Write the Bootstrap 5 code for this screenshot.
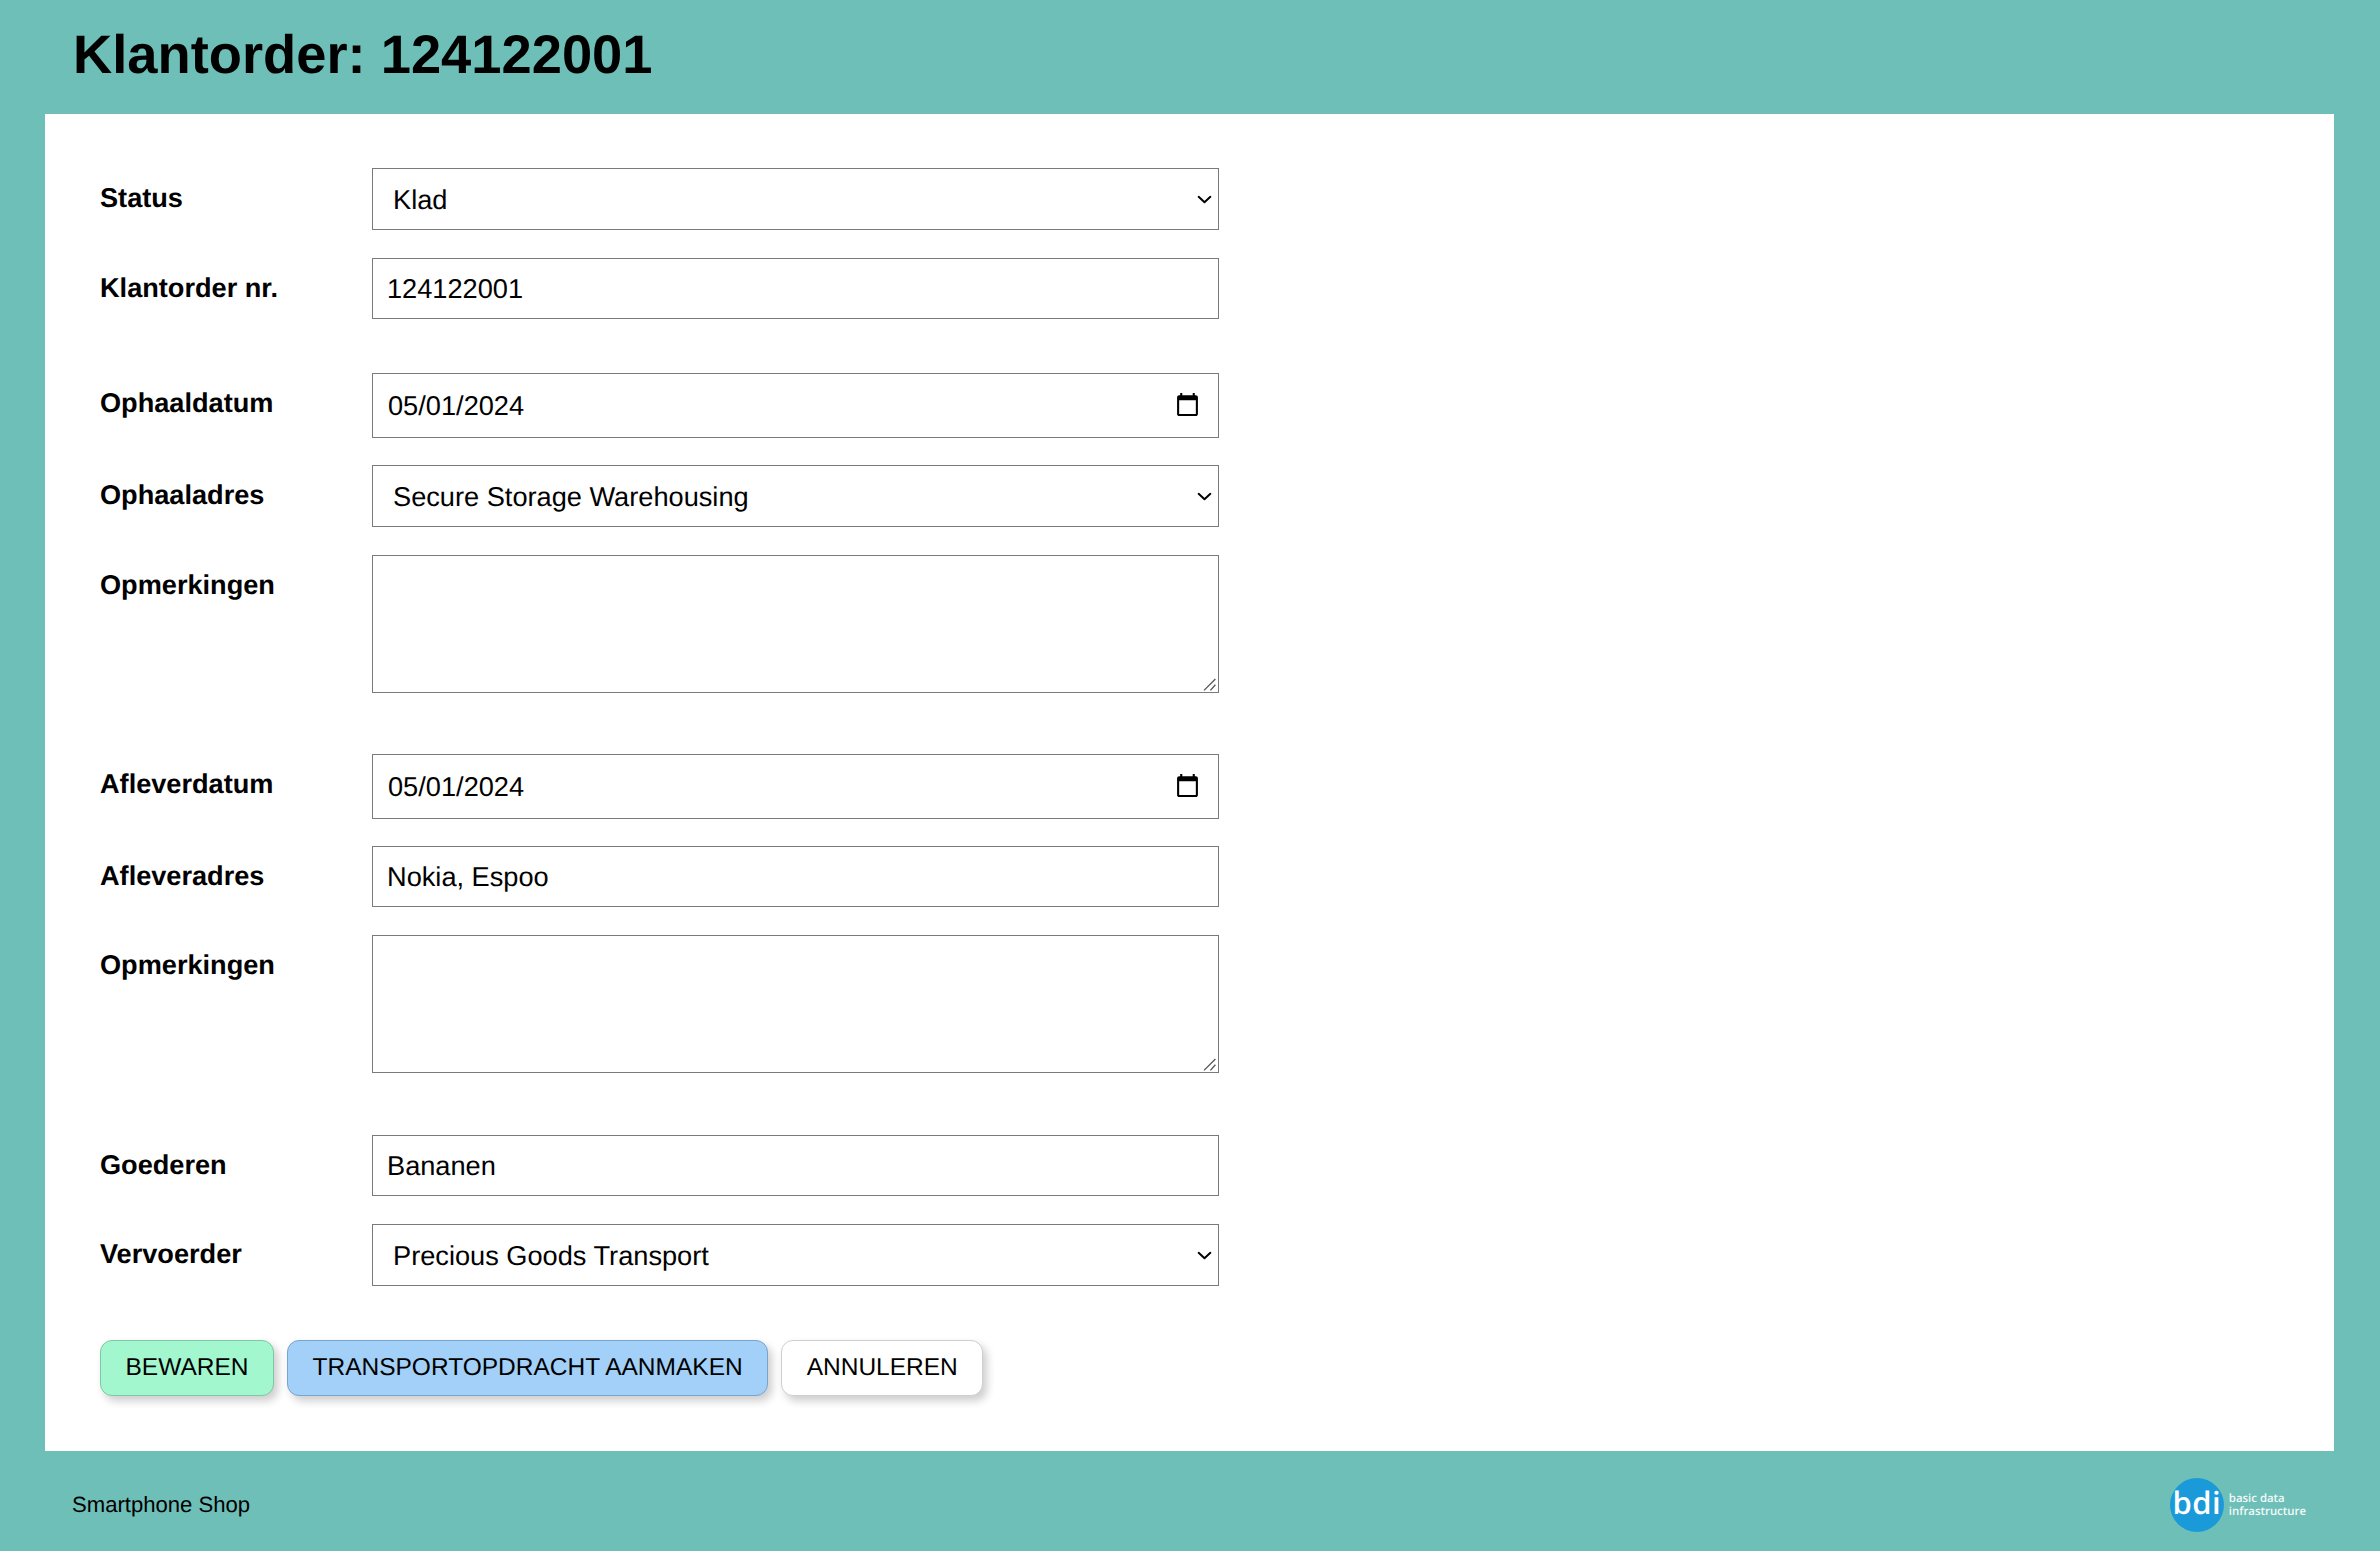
<!DOCTYPE html>
<html lang="en">
<head>
  <meta charset="UTF-8" />
  <meta name="viewport" content="width=device-width, initial-scale=1.0"/>
  <title>Klantorder</title>
  <link href="https://cdn.jsdelivr.net/npm/bootstrap@5.3.0/dist/css/bootstrap.min.css" rel="stylesheet">
  <style>
    body { background: #6ebfb8; color: #000; font-family: "Liberation Sans", Arial, sans-serif; font-size: 27px; min-height: 100vh; text-rendering: geometricPrecision; }
    .page-head { height: 114px; padding: 26px 0 0 73px; }
    .page-head h1 { font-size: 54.3px; font-weight: 700; line-height: 57px; margin: 0; }
    .page-main { margin: 0 46px 0 45px; height: 1337px; padding: 54px 55px 0; background: #fff; }
    .field-row { margin-bottom: 28px; }
    .field-row.date-row { margin-bottom: 27px; }
    .field-row.group-end { margin-bottom: 54px; }
    .field-row.area-end { margin-bottom: 61px; }
    .field-row.area-last { margin-bottom: 62px; }
    .field-label { width: 272px; flex: none; font-size: 27.15px; font-weight: 700; padding-top: 9.5px; line-height: 40px; margin: 0; }
    .field-box { width: 847px; flex: none; }
    .form-control, .form-select { border: 1px solid #7a7a7a; border-radius: 0; font-size: 27.2px; color: #000; line-height: 40px; box-shadow: none; text-rendering: geometricPrecision; }
    .form-control { height: 61px; padding: 8px 14px; }
    .form-select { height: 62px; padding: 9px 40px 7px 20px; background-image: url("data:image/svg+xml,%3csvg xmlns='http://www.w3.org/2000/svg' viewBox='0 0 16 10'%3e%3cpath fill='none' stroke='%23000' stroke-width='2.2' stroke-linecap='round' stroke-linejoin='round' d='M1.5 2 8 8l6.5-6'/%3e%3c/svg%3e"); background-position: right 6px center; background-size: 15px 9px; }
    input[type=date].form-control { height: 65px; padding-left: 15px; padding-right: 15px; }
    textarea.form-control { height: 138px; min-height: 0; }
    textarea.form-control::-webkit-resizer { background: url("data:image/svg+xml,%3csvg xmlns='http://www.w3.org/2000/svg' width='15' height='15'%3e%3cpath fill='none' stroke='%23555' stroke-width='1.3' d='M1 13.4 12.4 2M7.4 13.4l5-5.7'/%3e%3c/svg%3e") no-repeat; }
    .act-row { gap: 13px; }
    .btn.act-btn { height: 56px; border-radius: 12px; font-size: 24.5px; color: #000; padding: 0 24.5px; box-shadow: 4px 5px 9px rgba(0,0,0,.2); border-width: 1px; text-rendering: geometricPrecision; }
    .act-save { background: #a3f7cf; border-color: #7fc8a6; }
    .act-transport { background: #a2d0f9; border-color: #76a5d0; }
    .act-cancel { background: #fff; border-color: #cfcfcf; }
    .page-foot { height: 100px; padding: 8px 74px 0 72px; font-size: 22.1px; }
    .bdi-logo { gap: 5px; color: #fff; }
    .bdi-disc { width: 54px; height: 54px; border-radius: 50%; background: #1b9ad9; font-family: "Open Sans", sans-serif; font-size: 31px; line-height: 50px; text-align: center; letter-spacing: .5px; font-weight: 600; }
    .bdi-text { font-family: "Open Sans", sans-serif; font-size: 11.4px; line-height: 13px; color: #f2fbfa; font-weight: 600; }
  </style>
</head>
<body class="d-flex flex-column">

  <header class="page-head">
    <h1>Klantorder: 124122001</h1>
  </header>

  <main class="page-main">
    <form onsubmit="event.preventDefault();">
      <div class="field-row d-flex">
        <label class="field-label" for="status">Status</label>
        <div class="field-box">
          <select class="form-select" id="status"><option>Klad</option></select>
        </div>
      </div>
      <div class="field-row group-end d-flex">
        <label class="field-label" for="nummer">Klantorder nr.</label>
        <div class="field-box"><input type="text" class="form-control" id="nummer" value="124122001" /></div>
      </div>

      <div class="field-row date-row d-flex">
        <label class="field-label" for="ophaaldatum">Ophaaldatum</label>
        <div class="field-box"><input type="date" class="form-control" id="ophaaldatum" value="2024-05-01" /></div>
      </div>
      <div class="field-row d-flex">
        <label class="field-label" for="ophaaladres">Ophaaladres</label>
        <div class="field-box">
          <select class="form-select" id="ophaaladres"><option>Secure Storage Warehousing</option></select>
        </div>
      </div>
      <div class="field-row area-end d-flex">
        <label class="field-label" for="opm1">Opmerkingen</label>
        <div class="field-box d-flex"><textarea class="form-control" id="opm1"></textarea></div>
      </div>

      <div class="field-row date-row d-flex">
        <label class="field-label" for="afleverdatum">Afleverdatum</label>
        <div class="field-box"><input type="date" class="form-control" id="afleverdatum" value="2024-05-01" /></div>
      </div>
      <div class="field-row d-flex">
        <label class="field-label" for="afleveradres">Afleveradres</label>
        <div class="field-box"><input type="text" class="form-control" id="afleveradres" value="Nokia, Espoo" /></div>
      </div>
      <div class="field-row area-last d-flex">
        <label class="field-label" for="opm2">Opmerkingen</label>
        <div class="field-box d-flex"><textarea class="form-control" id="opm2"></textarea></div>
      </div>

      <div class="field-row d-flex">
        <label class="field-label" for="goederen">Goederen</label>
        <div class="field-box"><input type="text" class="form-control" id="goederen" value="Bananen" /></div>
      </div>
      <div class="field-row group-end d-flex">
        <label class="field-label" for="vervoerder">Vervoerder</label>
        <div class="field-box">
          <select class="form-select" id="vervoerder"><option>Precious Goods Transport</option></select>
        </div>
      </div>

      <div class="d-flex act-row">
        <button type="submit" class="btn act-btn act-save">BEWAREN</button>
        <button type="button" class="btn act-btn act-transport">TRANSPORTOPDRACHT AANMAKEN</button>
        <button type="button" class="btn act-btn act-cancel">ANNULEREN</button>
      </div>
    </form>
  </main>

  <footer class="page-foot d-flex justify-content-between align-items-center">
    <span>Smartphone Shop</span>
    <div class="bdi-logo d-flex align-items-center">
      <div class="bdi-disc">bdi</div>
      <div class="bdi-text">basic data<br>infrastructure</div>
    </div>
  </footer>

</body>
</html>
